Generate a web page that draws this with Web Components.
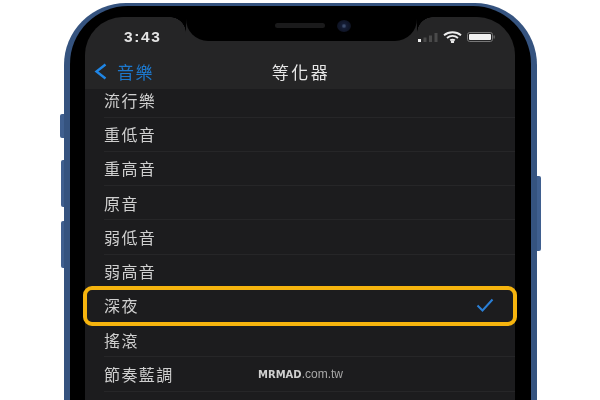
<!DOCTYPE html>
<html>
<head>
<meta charset="utf-8">
<style>
  html, body { margin: 0; height: 400px; overflow: hidden; background: #fff; }
  body { font-family: "Liberation Sans", "Noto Sans CJK TC", sans-serif; }
</style>
</head>
<body>
<phone-frame>
  <status-bar slot="top" time="3:43"></status-bar>
  <nav-bar slot="top" back="音樂" title="等化器"></nav-bar>
  <eq-list>
    <eq-row>流行樂</eq-row>
    <eq-row>重低音</eq-row>
    <eq-row>重高音</eq-row>
    <eq-row>原音</eq-row>
    <eq-row>弱低音</eq-row>
    <eq-row>弱高音</eq-row>
    <eq-row selected>深夜</eq-row>
    <eq-row>搖滾</eq-row>
    <eq-row>節奏藍調</eq-row>
  </eq-list>
  <water-mark></water-mark>
</phone-frame>

<script>
class PhoneFrame extends HTMLElement {
  constructor() {
    super();
    this.attachShadow({ mode: 'open' });
    this.shadowRoot.innerHTML = `
      <style>
        :host {
          display: block;
          position: relative;
          width: 473px;
          height: 397px;
          margin: 3px 0 0 64px;
          filter: blur(.35px);
        }
        .band {
          height: 100%;
          box-sizing: border-box;
          padding: 3px 6px 0;
          border-radius: 62px 62px 0 0;
          background: #35537f;
        }
        .bezel {
          position: relative;
          height: 100%;
          box-sizing: border-box;
          padding: 11px 16px 0 15px;
          border-radius: 58px 58px 0 0;
          background: #000;
        }
        .screen {
          position: relative;
          height: 100%;
          border-radius: 42px 42px 0 0;
          background: #1c1c1e;
        }
        .notch {
          position: absolute;
          z-index: 3;
          top: 0;
          left: 101px;
          width: 231px;
          height: 24px;
          border-radius: 0 0 22px 22px;
          background: #000;
        }
        .notch::before, .notch::after {
          content: '';
          position: absolute;
          top: 0;
          width: 16px;
          height: 16px;
          background: radial-gradient(circle at 0 100%, transparent 15.5px, #000 16px);
        }
        .notch::before { left: -16px; }
        .notch::after { right: -16px; transform: scaleX(-1); }
        .speaker {
          position: absolute;
          top: 6px;
          left: 89px;
          width: 50px;
          height: 5px;
          border-radius: 3px;
          background: #1a1a1b;
        }
        .camera {
          position: absolute;
          top: 3px;
          left: 151px;
          width: 14px;
          height: 12px;
          border-radius: 50%;
          background: radial-gradient(circle, #3a4a6a 0 1px, #141c34 2.5px, #0a0d17 100%);
        }
        .btn {
          position: absolute;
          background: #3f5f8f;
        }
        .mute { left: -4px; top: 111px; width: 4px; height: 24px; border-radius: 2px 0 0 2px; }
        .up { left: -3px; top: 157px; width: 3px; height: 47px; border-radius: 2px 0 0 2px; }
        .down { left: -3px; top: 218px; width: 3px; height: 47px; border-radius: 2px 0 0 2px; }
        .power { right: -4px; top: 173px; width: 4px; height: 75px; border-radius: 0 2px 2px 0; }
      </style>
      <div class="btn mute"></div>
      <div class="btn up"></div>
      <div class="btn down"></div>
      <div class="btn power"></div>
      <div class="band">
        <div class="bezel">
          <div class="screen">
            <div class="notch"><div class="speaker"></div><div class="camera"></div></div>
            <slot name="top"></slot>
            <slot></slot>
          </div>
        </div>
      </div>
    `;
  }
}

class StatusBar extends HTMLElement {
  constructor() {
    super();
    this.attachShadow({ mode: 'open' });
  }

  connectedCallback() {
    this.shadowRoot.innerHTML = `
      <style>
        :host {
          display: flex;
          align-items: center;
          justify-content: space-between;
          box-sizing: border-box;
          height: 38px;
          padding: 1px 20px 0 39px;
          border-radius: 42px 42px 0 0;
          background: #252526;
          color: #e4e4e4;
        }
        .time { font-size: 15.5px; font-weight: 700; letter-spacing: 1.6px; }
        .icons { display: flex; align-items: center; gap: 5px; padding-top: 1px; }
        svg { display: block; }
      </style>
      <span class="time">${this.getAttribute('time')}</span>
      <div class="icons">
        <svg width="20" height="9" viewBox="0 0 20 9">
          <rect x="0" y="6" width="3" height="3" fill="#eee"/>
          <rect x="5.5" y="4.5" width="3" height="4.5" fill="#4a4a4a"/>
          <rect x="11" y="2.5" width="3" height="6.5" fill="#4a4a4a"/>
          <rect x="16.5" y="0" width="3" height="9" fill="#4a4a4a"/>
        </svg>
        <svg width="19" height="12" viewBox="0 0 19 12" fill="none" stroke="#eee" stroke-width="1.9">
          <path d="M1 4.2C5.8 .2 13.2 .2 18 4.2"/>
          <path d="M4 6.9C7.2 4.4 11.8 4.4 15 6.9"/>
          <path d="M7.2 9.4C8.5 8.5 10.5 8.5 11.8 9.4"/>
          <circle cx="9.5" cy="10.8" r=".7" fill="#eee"/>
        </svg>
        <svg width="28" height="10" viewBox="0 0 28 10">
          <rect x=".5" y=".5" width="25" height="9" rx="2.2" fill="none" stroke="#777"/>
          <rect x="2" y="2" width="22" height="6" rx="1" fill="#f2f2f2"/>
          <rect x="26.5" y="3.5" width="1.3" height="3" fill="#666"/>
        </svg>
      </div>
    `;
  }
}

class NavBar extends HTMLElement {
  constructor() {
    super();
    this.attachShadow({ mode: 'open' });
  }

  connectedCallback() {
    this.shadowRoot.innerHTML = `
      <style>
        :host {
          display: block;
          position: relative;
          z-index: 2;
          height: 34px;
          background: #252526;
          font-size: 17px;
        }
        .bar {
          display: grid;
          grid-template-columns: 1fr auto 1fr;
          align-items: center;
          height: 26px;
          padding: 3px 0 5px 9px;
        }
        .back { display: flex; align-items: center; gap: 10px; color: #1d78cc; }
        .back span { letter-spacing: 1.5px; }
        .title { color: #e6e6e6; letter-spacing: 2.5px; padding-right: 7px; }
        svg { display: block; }
      </style>
      <div class="bar">
        <div class="back">
          <svg width="13" height="17" viewBox="0 0 13 17" fill="none" stroke="#1f86e6" stroke-width="2.4">
            <path d="M11.5 1.5L2.5 8.5l9 7"/>
          </svg>
          <span>${this.getAttribute('back')}</span>
        </div>
        <div class="title">${this.getAttribute('title')}</div>
      </div>
    `;
  }
}

class EqList extends HTMLElement {
  constructor() {
    super();
    this.attachShadow({ mode: 'open' });
    this.shadowRoot.innerHTML = `
      <style>
        :host {
          display: block;
          margin-top: -5.75px;
          background: #1c1c1e;
        }
      </style>
      <slot></slot>
    `;
  }
}

class EqRow extends HTMLElement {
  constructor() {
    super();
    this.attachShadow({ mode: 'open' });
    this.shadowRoot.innerHTML = `
      <style>
        :host {
          display: block;
          position: relative;
          height: 34.25px;
          padding-left: 19px;
          color: #cfcfcf;
          font-size: 16px;
          letter-spacing: 1.4px;
        }
        .line {
          display: flex;
          align-items: center;
          justify-content: space-between;
          box-sizing: border-box;
          height: 100%;
          padding-right: 21px;
          border-bottom: 1px solid #262628;
        }
        svg { display: none; }
        :host([selected]) svg { display: block; }
        :host([selected]) .line { border-bottom-color: transparent; }
        .ring { display: none; }
        :host([selected]) .ring {
          display: block;
          position: absolute;
          z-index: 2;
          left: -2px;
          right: -2px;
          top: -3px;
          bottom: -3px;
          border: 4px solid #f6b40e;
          border-radius: 9px;
        }
      </style>
      <div class="line">
        <slot></slot>
        <svg width="18" height="14" viewBox="0 0 18 14" fill="none" stroke="#2a7fd6" stroke-width="2">
          <path d="M1.5 7.5L6.5 12.5L16.5 1.5"/>
        </svg>
      </div>
      <div class="ring"></div>
    `;
  }
}

class WaterMark extends HTMLElement {
  constructor() {
    super();
    this.attachShadow({ mode: 'open' });
    this.shadowRoot.innerHTML = `
      <style>
        :host {
          position: absolute;
          z-index: 2;
          left: 173px;
          top: 350px;
          color: #a8a8a8;
          font-size: 12px;
          white-space: nowrap;
        }
        b { font-family: "DejaVu Sans", sans-serif; font-size: 10px; font-weight: 700; color: #cfcfcf; }
      </style>
      <b>MRMAD</b>.com.tw
    `;
  }
}

customElements.define('phone-frame', PhoneFrame);
customElements.define('status-bar', StatusBar);
customElements.define('nav-bar', NavBar);
customElements.define('eq-list', EqList);
customElements.define('eq-row', EqRow);
customElements.define('water-mark', WaterMark);
</script>
</body>
</html>
